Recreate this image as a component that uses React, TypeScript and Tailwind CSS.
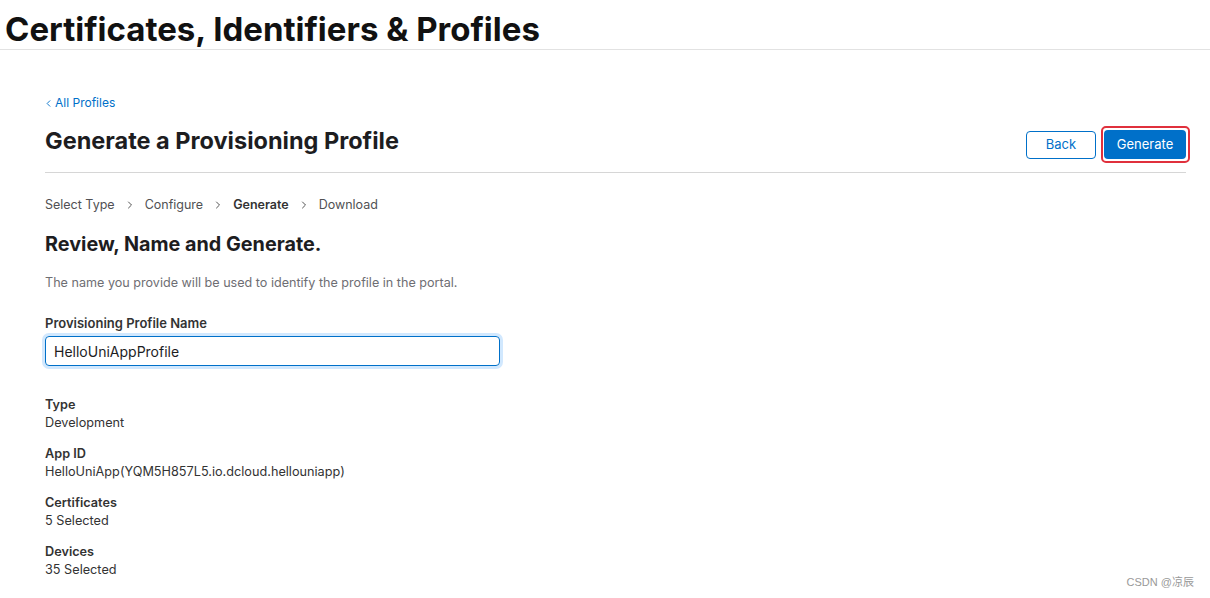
import { ChevronLeft, ChevronRight } from 'lucide-react';

const DETAILS = [
  { label: 'Type', value: 'Development' },
  { label: 'App ID', value: 'HelloUniApp(YQM5H857L5.io.dcloud.hellouniapp)' },
  { label: 'Certificates', value: '5 Selected' },
  { label: 'Devices', value: '35 Selected' },
];

const STEPS = [
  { label: 'Select Type', current: false },
  { label: 'Configure', current: false },
  { label: 'Generate', current: true },
  { label: 'Download', current: false },
];

export default function App() {
  return (
    <div
      className="relative h-[598px] w-[1210px] overflow-hidden bg-white text-[#1d1d1f]"
      style={{ fontFamily: 'Inter, "Noto Sans", sans-serif' }}
    >
      {/* Page header */}
      <header className="border-b border-[#e2e2e2] pl-[5px] pt-[10px] pb-[1px]">
        <h1 className="text-[33px] font-bold leading-[38px] text-[#111]">
          Certificates, Identifiers &amp; Profiles
        </h1>
      </header>

      <main className="pl-[45px] pr-[24px] pt-[45px]">
        <a href="#" className="flex items-center text-[12px] leading-[16px] text-[#0070c9]">
          <ChevronLeft className="-ml-[2px] mr-[1px] h-[11px] w-[11px]" strokeWidth={2} />
          All Profiles
        </a>

        {/* Title row */}
        <div className="mt-[16px] flex items-start justify-between border-b border-[#d6d6d6] pb-[13px]">
          <h2 className="text-[23.5px] font-bold leading-[28px] text-[#1d1d1f]">
            Generate a Provisioning Profile
          </h2>
          <div className="mt-[3px] flex items-center gap-[8px]">
            <button
              type="button"
              className="h-[28px] w-[70px] rounded-[4px] border border-[#0070c9] bg-white text-[13px] text-[#0070c9]"
            >
              Back
            </button>
            <div className="relative">
              <button
                type="button"
                className="block h-[29px] w-[82px] rounded-[4px] bg-[#0070c9] text-[13px] text-white"
              >
                Generate
              </button>
              <span className="pointer-events-none absolute -bottom-[4px] -left-[3px] -right-[4px] -top-[4px] rounded-[5px] border-2 border-[#e0303c]" />
            </div>
          </div>
        </div>

        {/* Steps */}
        <nav className="mt-[23px] flex items-center text-[12.5px] leading-[18px] text-[#515154]">
          {STEPS.map((step, i) => (
            <div key={step.label} className="flex items-center">
              <span className={step.current ? 'font-semibold text-[#333]' : ''}>{step.label}</span>
              {i < STEPS.length - 1 && (
                <ChevronRight className="mx-[9px] h-[12px] w-[12px] text-[#555]" strokeWidth={2} />
              )}
            </div>
          ))}
        </nav>

        <h3 className="mt-[18px] text-[19.8px] font-bold leading-[24px] text-[#1d1d1f]">
          Review, Name and Generate.
        </h3>

        <p className="mt-[19px] text-[12.6px] leading-[16px] text-[#6e6e73]">
          The name you provide will be used to identify the profile in the portal.
        </p>

        <label className="mt-[24px] block text-[13px] font-semibold leading-[16px] text-[#333]">
          Provisioning Profile Name
        </label>
        <input
          type="text"
          defaultValue="HelloUniAppProfile"
          className="mt-[5px] block h-[30px] w-[455px] rounded-[4px] border border-[#0070c9] px-[8px] text-[14px] text-[#1d1d1f] shadow-[0_0_0_3px_rgba(0,125,250,0.18)] outline-none"
        />

        {/* Details */}
        <dl className="mt-[30px] flex flex-col gap-[13px]">
          {DETAILS.map((d) => (
            <div key={d.label}>
              <dt className="text-[12.7px] font-semibold leading-[18px] text-[#333]">{d.label}</dt>
              <dd className="text-[12.7px] leading-[18px] text-[#333]">{d.value}</dd>
            </div>
          ))}
        </dl>
      </main>

      <span
        className="absolute bottom-[8px] right-[16px] text-[11px] text-[#999]"
        style={{ fontFamily: '"Liberation Sans", "Noto Sans CJK SC", sans-serif' }}
      >
        CSDN @凉辰
      </span>
    </div>
  );
}
